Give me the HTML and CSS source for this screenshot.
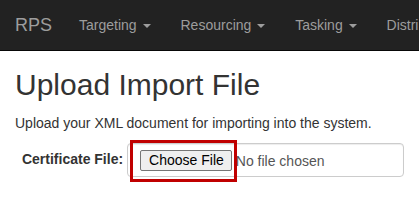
FILE: index.html
```html
<!DOCTYPE html>
<html lang="en">
<head>
<meta charset="utf-8">
<title>Upload Import File</title>
<link rel="stylesheet" href="styles.css">
</head>
<body>
<nav class="navbar">
  <a class="brand" href="#">RPS</a>
  <ul class="nav">
    <li><a href="#">Targeting <span class="caret"></span></a></li>
    <li><a href="#">Resourcing <span class="caret"></span></a></li>
    <li><a href="#">Tasking <span class="caret"></span></a></li>
    <li><a href="#">Distribution <span class="caret"></span></a></li>
  </ul>
</nav>
<main class="container">
  <h1 class="title">Upload Import File</h1>
  <p class="lead">Upload your XML document for importing into the system.</p>
  <div class="form-row">
    <label class="control-label">Certificate File:</label>
    <div class="file-input">
      <span class="file-btn">Choose File</span>
      <span class="file-text">No file chosen</span>
      <span class="highlight"></span>
    </div>
  </div>
</main>
</body>
</html>
```
FILE: styles.css
```css
html, body {
  margin: 0;
  padding: 0;
  overflow: hidden;
}
body {
  font-family: "Liberation Sans", Arial, Helvetica, sans-serif;
  font-size: 14px;
  line-height: 20px;
  color: #333;
  background: #fff;
  width: 419px;
  height: 202px;
}
.navbar {
  display: flex;
  height: 50px;
  background: #222;
  border-bottom: 1px solid #080808;
  white-space: nowrap;
  overflow: hidden;
}
.brand {
  display: block;
  padding: 15px 12px 15px 15px;
  font-size: 18px;
  line-height: 20px;
  color: #9d9d9d;
  text-decoration: none;
}
.nav {
  display: flex;
  list-style: none;
  margin: 0;
  padding: 0;
}
.nav a {
  display: block;
  padding: 15px;
  line-height: 20px;
  color: #9d9d9d;
  text-decoration: none;
}
.caret {
  display: inline-block;
  width: 0;
  height: 0;
  margin-left: 2px;
  vertical-align: middle;
  border-top: 4px solid #9d9d9d;
  border-left: 4px solid transparent;
  border-right: 4px solid transparent;
}
.container {
  padding: 0 15px;
}
.title {
  margin: 17px 0 12px;
  font-size: 30px;
  font-weight: 500;
  line-height: 33px;
  color: #333;
}
.lead {
  margin: 0 0 10px;
}
.form-row {
  display: flex;
  gap: 4px;
}
.control-label {
  width: 109px;
  padding-top: 6px;
  text-align: right;
  font-weight: bold;
}
.file-input {
  position: relative;
  box-sizing: border-box;
  width: 279px;
  height: 34px;
  display: flex;
  align-items: center;
  padding: 0 12px;
  border: 1px solid #ccc;
  border-radius: 4px;
  color: #555;
  box-shadow: inset 0 1px 1px rgba(0,0,0,.075);
}
.file-btn {
  box-sizing: border-box;
  height: 21px;
  padding: 0 7px 0 8px;
  margin-right: 4px;
  border: 1px solid #767676;
  border-radius: 2px;
  background: #efefef;
  color: #000;
  line-height: 19px;
}
.file-text {
  color: #555;
  padding-top: 2px;
}
.highlight {
  position: absolute;
  left: 2px;
  top: -4px;
  width: 107px;
  height: 42px;
  box-sizing: border-box;
  border: 3px solid #c00000;
}
```
